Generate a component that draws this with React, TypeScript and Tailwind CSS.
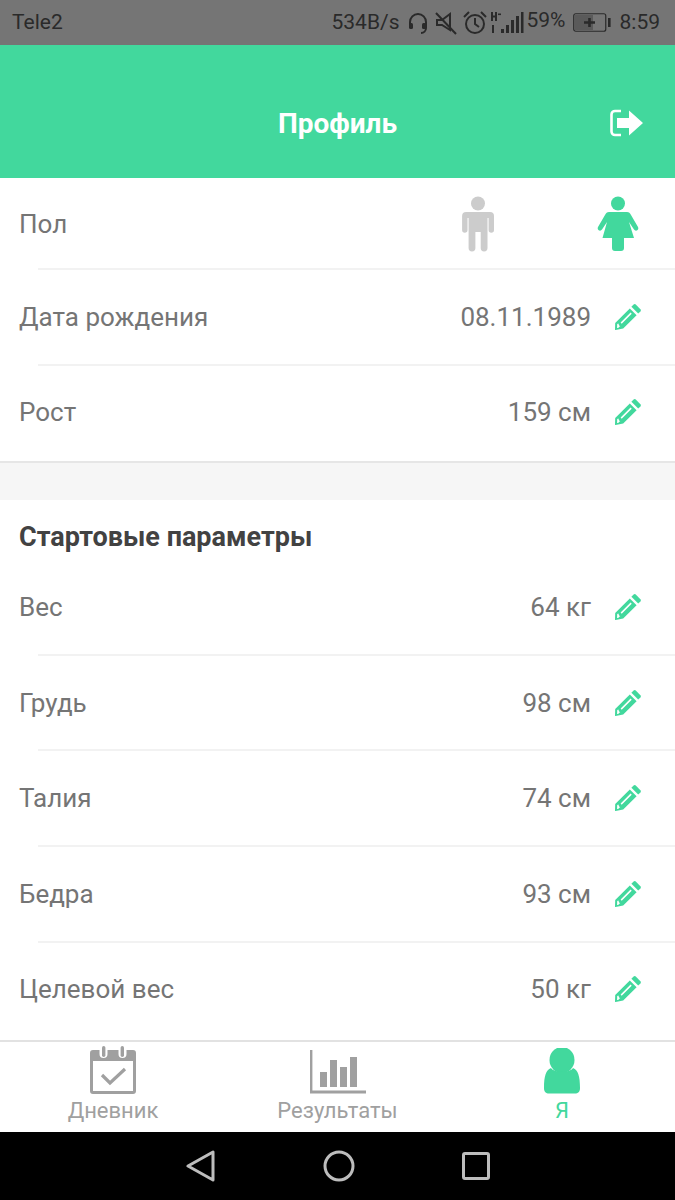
import React from "react";

const Pencil = () => (
  <svg width="28" height="28" viewBox="0 0 28 28" className="block">
    <path d="M19.6 1.6 a1.6 1.6 0 0 1 2.2 0 l4.6 4.6 a1.6 1.6 0 0 1 0 2.2 L24.2 10.6 17.4 3.8Z" fill="#42d89d" />
    <path fillRule="evenodd" fill="#42d89d" d="M15.8 5.4 L22.6 12.2 9.2 25.6 1.6 27 A.6.6 0 0 1 1 26.4 L1.2 19.9Z M16.6 9.6 L6.6 19.6 7.7 20.7 17.7 10.7Z M3.2 21 L3.1 24.9 4.4 25 5 23.8 6.3 23.6 5 22.2 4.4 20.6Z" />
  </svg>
);

const Row = ({ label, value, last }: { label: string; value: string; last?: boolean }) => (
  <div className="relative flex h-[95.6px] items-center justify-between pl-[19px] pr-[33px] text-[26px] text-[#757575]">
    <span className="-mt-[1px]">{label}</span>
    <div className="flex items-center gap-[23px]">
      <span className="-mt-[1px]">{value}</span>
      <span className="-mt-[2px]"><Pencil /></span>
    </div>
    {!last && <div className="absolute bottom-0 left-[38px] right-0 h-[2px] bg-[#f2f2f2]" />}
  </div>
);

export default function App() {
  return (
    <div className="flex h-[1200px] w-[675px] flex-col overflow-hidden bg-white font-['Roboto',sans-serif]">
      {/* status bar */}
      <div className="flex h-[45px] items-center justify-between bg-[#757575] pl-[12px] pr-[15px] text-[21px] text-[#2a2a2a]">
        <span>Tele2</span>
        <div className="flex items-center">
          <span>534B/s</span>
          <svg width="24" height="24" viewBox="0 0 24 24" fill="none" stroke="#2a2a2a" strokeWidth="2" className="ml-[6px]">
            <path d="M4 15 V11 a8 8 0 0 1 16 0 V17 a5 5 0 0 1-5 5" />
            <rect x="3" y="12" width="4" height="6" rx="1.5" fill="#2a2a2a" stroke="none" />
            <rect x="16" y="12" width="4" height="6" rx="1.5" fill="#2a2a2a" stroke="none" />
          </svg>
          <svg width="24" height="24" viewBox="0 0 24 24" fill="none" stroke="#2a2a2a" strokeWidth="2" className="ml-[4px]">
            <path d="M2 2 L22 23" />
            <path d="M3 9 H8 L16 3 V19 L8 14 H3Z" />
          </svg>
          <svg width="26" height="26" viewBox="0 0 26 26" fill="none" stroke="#2a2a2a" strokeWidth="2" className="ml-[4px]">
            <circle cx="13" cy="14" r="9" />
            <path d="M13 8 V14 L17 17 M2 7 L7 2 M19 2 L24 7" />
          </svg>
          <svg width="34" height="26" viewBox="0 0 34 26" fill="#2a2a2a" className="ml-[2px]">
            <rect x="1" y="2" width="2" height="9" />
            <rect x="5" y="2" width="2" height="9" />
            <rect x="3" y="5.5" width="2" height="2" />
            <rect x="8" y="3.5" width="3" height="1.6" />
            <rect x="2" y="15" width="2" height="8" />
            <rect x="11" y="19" width="3" height="4" />
            <rect x="16" y="15" width="3" height="8" />
            <rect x="21" y="10" width="3" height="13" />
            <rect x="26" y="6" width="3" height="17" />
            <rect x="31" y="2" width="2.5" height="21" />
          </svg>
          <span className="ml-[3px] -mt-[3px]">59%</span>
          <svg width="38" height="20" viewBox="0 0 38 20" fill="none" className="ml-[7px]">
            <rect x="0.75" y="0.75" width="32" height="17.5" rx="2" stroke="#2a2a2a" strokeWidth="1.2" />
            <rect x="2" y="2" width="18" height="15" fill="#5a5a5a" />
            <path d="M11 9.5 H22 M16.5 5 V14" stroke="#2a2a2a" strokeWidth="2.6" />
            <rect x="35" y="5" width="2.6" height="9" fill="#2a2a2a" />
          </svg>
          <span className="ml-[9px]">8:59</span>
        </div>
      </div>

      {/* header */}
      <div className="relative flex h-[133px] items-center justify-center bg-[#42d89d]">
        <span className="mt-[25px] text-[28px] font-bold text-white">Профиль</span>
        <svg width="34" height="28" viewBox="0 0 34 28" className="absolute right-[31px] top-[64px]" fill="none">
          <path d="M11 2 H5 a3.5 3.5 0 0 0 -3.5 3.5 V22.5 a3.5 3.5 0 0 0 3.5 3.5 H11" stroke="#fff" strokeWidth="2.6" />
          <path d="M7 9 H19 V1.5 L33 14 19 26.5 V19 H7Z" fill="#fff" />
        </svg>
      </div>

      {/* content */}
      <div className="flex min-h-0 flex-1 flex-col">
        <div className="relative flex h-[92px] items-center justify-between pl-[19px] pr-[36px] text-[26px] text-[#757575]">
          <span>Пол</span>
          <div className="flex items-center gap-[102px]">
            <svg width="34" height="56" viewBox="0 0 34 56" fill="#cccccc" className="mt-[0px]">
              <circle cx="17" cy="7.5" r="7" />
              <path d="M5 16 H29 a4 4 0 0 1 4 4 V34 a2.6 2.6 0 0 1-5.4 0 V22 H26.5 V52 a3.4 3.4 0 0 1-6.8 0 V36 H14.4 V52 a3.4 3.4 0 0 1-6.8 0 V22 H6.5 V34 a2.6 2.6 0 0 1-5.4 0 V20 a4 4 0 0 1 4-4Z" />
            </svg>
            <svg width="42" height="56" viewBox="0 0 42 56" fill="#42d89d">
              <circle cx="21" cy="7.5" r="7" />
              <path d="M12 16 H30 C32 16 33 17 34 19 L41 31 C42.5 34 38.5 36 37 33.5 L32 26 37 42 H27 V52 a3 3 0 0 1-3 3 H18 a3 3 0 0 1-3-3 V42 H5.5 L10 26 5 33.5 C3.5 36-.5 34 1 31 L8 19 C9 17 10 16 12 16Z" />
            </svg>
          </div>
          <div className="absolute bottom-0 left-[38px] right-0 h-[2px] bg-[#f2f2f2]" />
        </div>
        <Row label="Дата рождения" value="08.11.1989" />
        <Row label="Рост" value="159 см" last />
        <div className="h-[39px] border-t-2 border-[#e6e6e6] bg-[#f6f6f6]" />
        <div className="flex h-[60px] items-end pb-[3px] pl-[19px] text-[27px] font-bold text-[#424242]">Стартовые параметры</div>
        <Row label="Вес" value="64 кг" />
        <Row label="Грудь" value="98 см" />
        <Row label="Талия" value="74 см" />
        <Row label="Бедра" value="93 см" />
        <Row label="Целевой вес" value="50 кг" last />
      </div>

      {/* tab bar */}
      <div className="flex h-[92px] border-t-2 border-[#e2e2e2] bg-white text-[22px]">
        <div className="flex w-[226px] flex-col items-center text-[#a0a0a0]">
          <svg width="46" height="50" viewBox="0 0 46 50" fill="none" className="mt-[3px]">
            <path fill="#a0a0a0" fillRule="evenodd" d="M3 5 H9.5 V9 a4 4 0 0 0 8 0 V5 H28.5 V9 a4 4 0 0 0 8 0 V5 H43 a3 3 0 0 1 3 3 V46 a3 3 0 0 1-3 3 H3 a3 3 0 0 1-3-3 V8 a3 3 0 0 1 3-3Z M3 16 V46 H43 V16Z" />
            <rect x="12" y="1" width="3.4" height="11" rx="1.7" fill="#a0a0a0" />
            <rect x="30.6" y="1" width="3.4" height="11" rx="1.7" fill="#a0a0a0" />
            <path d="M12 30 L20 38 L35 24" stroke="#a0a0a0" strokeWidth="3.2" />
          </svg>
          <span className="mt-[3px] leading-[26px]">Дневник</span>
        </div>
        <div className="flex flex-1 flex-col items-center text-[#a0a0a0]">
          <svg width="58" height="50" viewBox="0 0 58 50" fill="#a0a0a0" className="mt-[3px]">
            <rect x="1" y="5" width="2.4" height="43" />
            <rect x="1" y="45.5" width="56" height="3" />
            <rect x="11" y="27" width="7" height="15" />
            <rect x="21" y="15" width="7" height="27" />
            <rect x="31" y="22" width="7" height="20" />
            <rect x="41" y="12" width="7" height="30" />
          </svg>
          <span className="mt-[3px] leading-[26px]">Результаты</span>
        </div>
        <div className="flex w-[226px] flex-col items-center text-[#42d89d]">
          <svg width="36" height="46" viewBox="0 0 36 46" fill="#42d89d" className="mt-[6px] mb-[1px]">
            <ellipse cx="18" cy="12" rx="12.5" ry="13" />
            <path d="M7 20 C10 25 26 25 29 20 C34 22 36 28 36 40 C36 44 34 45.5 31 45.5 H5 C2 45.5 0 44 0 40 C0 28 2 22 7 20Z" />
          </svg>
          <span className="mt-[3px] leading-[26px]">Я</span>
        </div>
      </div>

      {/* nav bar */}
      <div className="flex h-[68px] items-center justify-center gap-[107px] bg-black">
        <svg width="30" height="32" viewBox="0 0 30 32" fill="none" stroke="#bdbdbd" strokeWidth="3" strokeLinejoin="round">
          <path d="M27 2 V30 L2 16Z" />
        </svg>
        <svg width="32" height="32" viewBox="0 0 32 32" fill="none" stroke="#bdbdbd" strokeWidth="3">
          <circle cx="16" cy="16" r="14" />
        </svg>
        <svg width="28" height="28" viewBox="0 0 28 28" fill="none" stroke="#bdbdbd" strokeWidth="3" strokeLinejoin="round">
          <rect x="1.5" y="1.5" width="25" height="25" rx="1.5" />
        </svg>
      </div>
    </div>
  );
}
